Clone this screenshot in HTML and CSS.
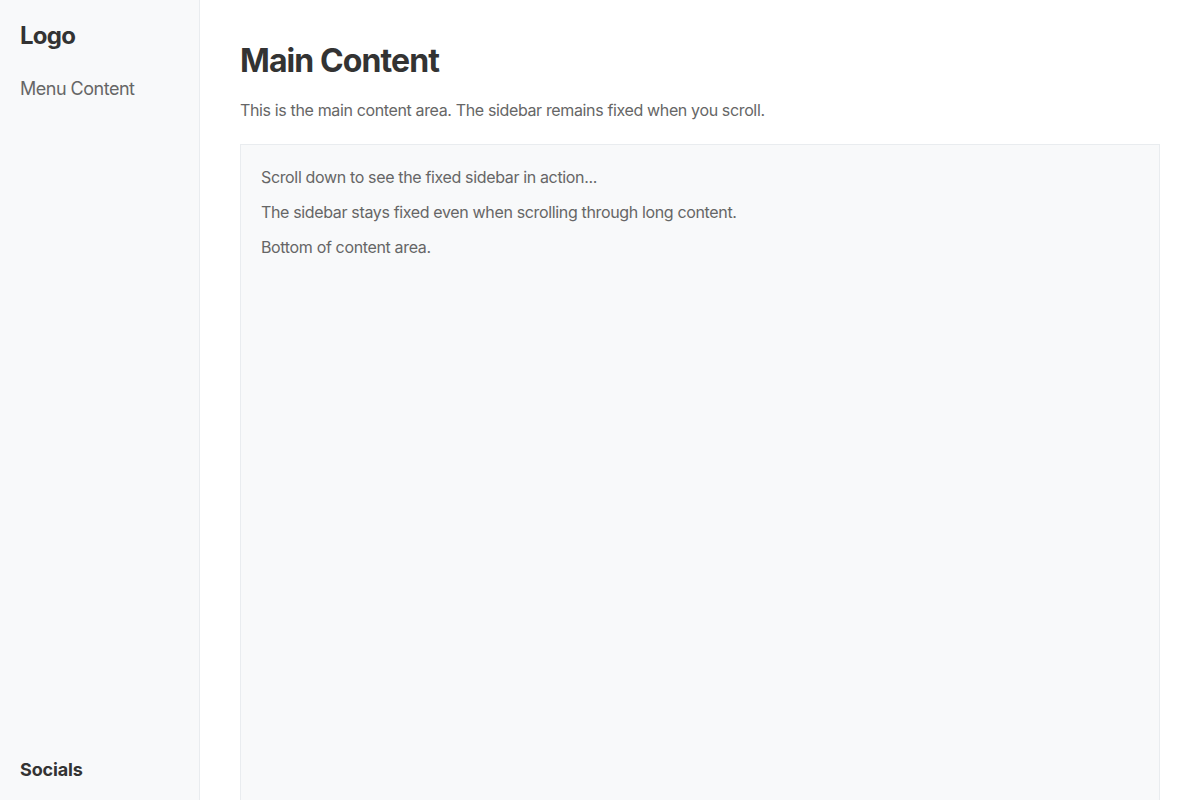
FILE: index.html
```html
<!DOCTYPE html>
<html lang="en">
<head>
<meta charset="utf-8">
<title>Fixed Sidebar</title>
<link rel="stylesheet" href="styles.css">
</head>
<body>
<div class="app">
  <aside class="sidebar">
    <div class="logo">Logo</div>
    <nav class="menu">Menu Content</nav>
    <div class="socials">Socials</div>
  </aside>
  <main class="main">
    <h1 class="title">Main Content</h1>
    <p class="lead">This is the main content area. The sidebar remains fixed when you scroll.</p>
    <section class="content-box">
      <p class="box-text">Scroll down to see the fixed sidebar in action...</p>
      <p class="box-text">The sidebar stays fixed even when scrolling through long content.</p>
      <p class="box-text">Bottom of content area.</p>
    </section>
  </main>
</div>
</body>
</html>
```

FILE: styles.css
```css
* { box-sizing: border-box; }
html, body {
  margin: 0;
  height: 100%;
}
body {
  font-family: Inter, "Noto Sans", "Liberation Sans", sans-serif;
  color: #333;
  background: #fff;
}
.app {
  display: flex;
  height: 100vh;
  overflow: hidden;
}
.sidebar {
  width: 200px;
  flex-shrink: 0;
  background: #f8f9fa;
  border-right: 1px solid #e9ecef;
  padding: 22px 20px 19px;
  display: flex;
  flex-direction: column;
}
.logo {
  font-size: 24px;
  font-weight: 700;
  line-height: 1.2;
  letter-spacing: -0.75px;
  color: #333;
}
.menu {
  margin-top: 27px;
  font-size: 18px;
  line-height: 1.2;
  letter-spacing: -0.5px;
  color: #666;
}
.socials {
  margin-top: auto;
  font-size: 18px;
  font-weight: 700;
  line-height: 1.2;
  letter-spacing: -0.15px;
  color: #333;
}
.main {
  flex: 1;
  padding: 42px 40px 40px;
  overflow-y: auto;
  scrollbar-width: none;
}
.title {
  margin: 0 0 18px;
  font-size: 32px;
  font-weight: 700;
  line-height: 1.2;
  letter-spacing: -0.9px;
  color: #333;
}
.lead {
  margin: 0 0 22px;
  font-size: 16px;
  line-height: 1.5;
  letter-spacing: -0.36px;
  color: #666;
}
.content-box {
  min-height: 1200px;
  background: #f8f9fa;
  border: 1px solid #e9ecef;
  padding: 20px;
}
.box-text {
  margin: 0 0 11px;
  font-size: 16px;
  line-height: 1.5;
  letter-spacing: -0.35px;
  color: #666;
}
```
